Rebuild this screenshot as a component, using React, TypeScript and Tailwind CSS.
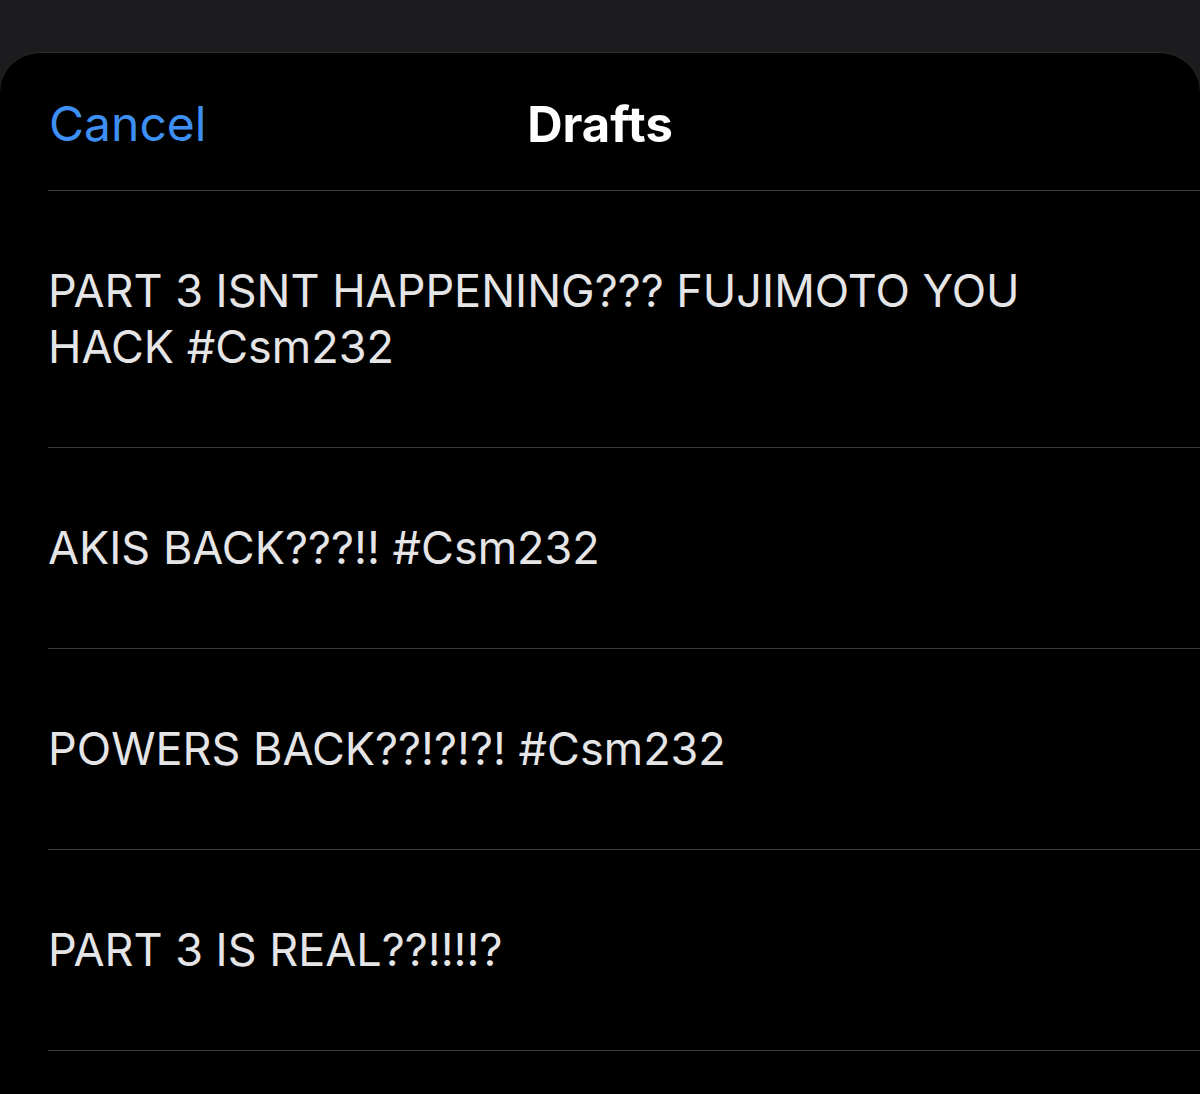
const drafts = [
  'PART 3 ISNT HAPPENING??? FUJIMOTO YOU HACK #Csm232',
  'AKIS BACK???!! #Csm232',
  'POWERS BACK??!?!?! #Csm232',
  'PART 3 IS REAL??!!!!?',
];

export default function App() {
  return (
    <div
      className="w-[1200px] h-[1094px] overflow-hidden bg-[#1c1c1e] pt-[52px]"
      style={{ fontFamily: 'Inter, "Liberation Sans", Arial, sans-serif' }}
    >
      {/* Sheet */}
      <div className="h-full bg-black rounded-t-[40px] border-t border-[#2a2a2d]">
        {/* Header */}
        <div className="relative h-[137px] flex items-center justify-center">
          <button className="absolute left-[49px] top-[42px] text-[48px] leading-[58px] text-[#3e8ff3]">
            Cancel
          </button>
          <h1 className="text-[49px] leading-[58px] font-bold text-white mt-[6px]">Drafts</h1>
        </div>

        {/* Draft rows */}
        <div className="pl-[48px]">
          {drafts.map((d) => (
            <div key={d} className="border-t border-[#3a3a3c]">
              <p className="pr-[150px] py-[72px] text-[45px] leading-[56px] text-[#e5e5e7]">{d}</p>
            </div>
          ))}
          <div className="border-t border-[#3a3a3c]" />
        </div>
      </div>
    </div>
  );
}
